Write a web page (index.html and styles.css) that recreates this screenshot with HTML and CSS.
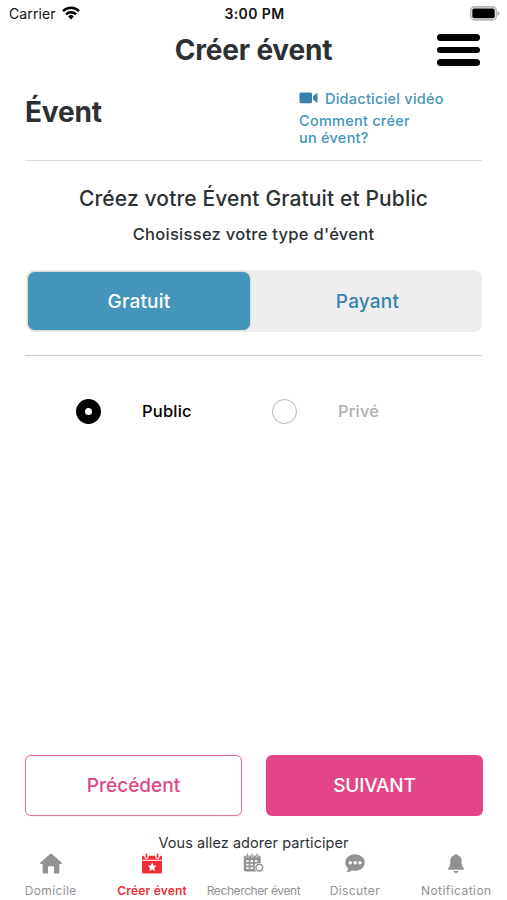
FILE: index.html
```html
<!DOCTYPE html>
<html lang="fr">
<head>
<meta charset="utf-8">
<title>Créer évent</title>
<link rel="stylesheet" href="styles.css">
</head>
<body>
<div class="app">
  <div class="status">
    <div class="carrier"><span>Carrier</span>
      <svg width="18" height="14" viewBox="0 0 18 14" fill="none" stroke="#000" stroke-width="2.5"><path d="M1 5.1a11.5 11.5 0 0 1 16 0M4 8.3a7.2 7.2 0 0 1 10 0"/><path d="M9 13.4 6.1 10.5a4.2 4.2 0 0 1 5.8 0z" fill="#000" stroke="none"/></svg>
    </div>
    <span class="clock">3:00 PM</span>
    <svg class="battery" width="31" height="15" viewBox="0 0 31 15"><rect x="1.700" y=".9" width="25.600" height="13" rx="4" fill="#fff" stroke="#b5b5b5" stroke-width="1.6"/><rect x="3.300" y="2.600" width="22.400" height="9.600" rx="1.8"/><path d="M28.4 5.2q2 .6 2 2.3t-2 2.3z" fill="#aaa"/></svg>
  </div>
  <header class="header">
    <h1 class="title">Créer évent</h1>
    <div class="burger"><i></i><i></i><i></i></div>
  </header>
  <main class="content">
    <section class="intro">
      <h2 class="heading">Évent</h2>
      <div class="tutorial">
        <div class="video"><svg width="19" height="12" viewBox="0 0 19 12" fill="#3682ae"><rect x=".5" y=".5" width="12.5" height="10.800" rx="1.500"/><path d="M14 4.200 17.200 1.500q1.300-.8 1.300.7v7.500q0 1.400-1.300.6L14 7.600z"/></svg><span class="video-label">Didacticiel vidéo</span></div>
        <div class="help"><span class="help-a">Comment créer</span><br><span class="help-b">un évent?</span></div>
      </div>
    </section>
    <section class="kind">
      <h3 class="kind-title"><span>Créez votre Évent Gratuit et Public</span></h3>
      <p class="kind-sub"><span>Choisissez votre type d'évent</span></p>
      <div class="segments">
        <div class="segment active"><span>Gratuit</span></div>
        <div class="segment"><span>Payant</span></div>
      </div>
    </section>
    <section class="radios">
      <div class="option"><i class="radio checked"></i><span class="public">Public</span></div>
      <div class="option muted"><i class="radio"></i><span class="prive">Privé</span></div>
    </section>
    <section class="actions">
      <div class="button outline"><span>Précédent</span></div>
      <div class="button filled"><span>SUIVANT</span></div>
    </section>
  </main>
  <p class="tagline"><span>Vous allez adorer participer</span></p>
  <nav class="tabs">
    <div class="tab"><svg width="24" height="22" viewBox="0 0 24 22"><path fill="currentColor" d="M12 .8q.7 0 1.200.5l9.400 8.200q1 1.200-.4 1.500h-1.800v8.200q0 1.300-1.300 1.300H15v-6.200q0-1-1-1h-4q-1 0-1 1v6.200H4.900q-1.300 0-1.300-1.300V11H1.800q-1.400-.3-.4-1.500l9.400-8.200q.5-.5 1.200-.5z"/></svg><span class="t1">Domicile</span></div>
    <div class="tab current"><svg width="24" height="22" viewBox="0 0 24 22"><path fill="currentColor" d="M2 7.700h20v11.200q0 1.600-1.600 1.600H3.600Q2 20.500 2 18.900z"/><path fill="currentColor" d="M2 6.700V4.200q0-1.400 1.400-1.400h.8q.2 3.200 2.300 3.200t2.300-3.200h6.400q.2 3.200 2.300 3.200t2.300-3.200h.8q1.400 0 1.400 1.400v2.500z"/><path d="M6.500 1.300v2.900M17.500 1.300v2.900" stroke="currentColor" stroke-width="1.700" stroke-linecap="round"/><path fill="#fff" d="m12.200 9.600 1.300 2.800 3 .4-2.200 2.100.6 3.100-2.700-1.500-2.700 1.500.6-3.100-2.200-2.100 3-.4z"/></svg><span class="t2">Créer évent</span></div>
    <div class="tab"><svg width="24" height="22" viewBox="0 0 24 22"><path fill="currentColor" d="M4.500 2.500h13.500q1.700 0 1.700 1.700V18.500H4.500q-1.700 0-1.700-1.700V4.200q0-1.700 1.700-1.700z"/><path d="M6.500 1v3.600M11.200 1v3.600M16 1v3.600" stroke="#fff" stroke-width="2.400"/><path d="M6.500 .8v3.200M11.200 .8v3.200M16 .8v3.200" stroke="currentColor" stroke-width="1.300" stroke-linecap="round"/><path d="M5.200 8.200h2.500m1.800 0h2.500m1.800 0h2.500M5.200 11.700h2.500m1.800 0h2.500m1.800 0h2.500M5.200 15.200h2.500m1.800 0h2.500" stroke="#fff" stroke-width="1.800"/><circle cx="18.300" cy="14.600" r="4.700" fill="#fff"/><circle cx="18.300" cy="14.600" r="3.400" fill="#fff" stroke="currentColor" stroke-width="1.500"/></svg><span class="t3">Rechercher évent</span></div>
    <div class="tab"><svg width="24" height="22" viewBox="0 0 24 22"><path fill="currentColor" d="M12 1.200c5.500 0 9.700 3.600 9.700 8.300s-4.200 8.300-9.700 8.300q-1.500 0-3-.4c-1.500 1.100-3.300 1.600-5.500 1.700 1-1 1.600-2.200 1.600-3.600-1.800-1.500-2.800-3.600-2.800-6 0-4.700 4.200-8.300 9.700-8.300z"/><g fill="#fff"><circle cx="7.300" cy="9.700" r="1.700"/><circle cx="12.100" cy="9.700" r="1.700"/><circle cx="16.900" cy="9.700" r="1.700"/></g></svg><span class="t4">Discuter</span></div>
    <div class="tab"><svg width="24" height="22" viewBox="0 0 24 22"><path fill="currentColor" d="M12 .7q1 0 1 1.200c3.200.6 4.700 3 4.700 6 0 4.300.7 5.700 2 7.200.7 1-.1 1.600-.8 1.600H5.100c-.7 0-1.500-.6-.8-1.600 1.300-1.500 2-2.900 2-7.200 0-3 1.500-5.400 4.700-6Q11 .7 12 .7zM9.500 18h5q-.3 1.900-2.500 1.900T9.500 18z"/></svg><span class="t5">Notification</span></div>
  </nav>
</div>
</body>
</html>
```
FILE: styles.css
```css
* { box-sizing: border-box; }
body { margin: 0; background: #fff; font-family: Inter, "Liberation Sans", sans-serif; color: #2c3133; }
h1, h2, h3, p { margin: 0; }
span { white-space: nowrap; }
svg { display: block; flex: none; }
.app { width: 507px; height: 900px; display: flex; flex-direction: column; overflow: hidden; }
.status { height: 28px; display: grid; grid-template-columns: 1fr auto 1fr; align-items: center; padding: 0 7px 2px 9px; color: #111; font-size: 14px; }
.carrier { display: flex; align-items: center; gap: 6px; letter-spacing: .1px; }
.clock { font-weight: 600; letter-spacing: .4px; }
.battery { justify-self: end; }
.header { height: 44px; display: grid; grid-template-columns: 1fr auto 1fr; align-items: center; padding: 0 27px; }
.title { grid-column: 2; font-size: 28px; line-height: 44px; font-weight: 700; letter-spacing: -.2px; white-space: nowrap; }
.burger { justify-self: end; display: flex; flex-direction: column; gap: 6px; }
.burger i { width: 43px; height: 6.500px; border-radius: 4px; background: #000; }
.content { flex: 1; display: flex; flex-direction: column; padding: 0 25px; }
.intro { height: 89px; border-bottom: 1px solid #d9d9d9; display: grid; grid-template-columns: 274px 1fr; }
.heading { font-size: 28px; line-height: 36px; font-weight: 700; letter-spacing: -.15px; padding-top: 22px; }
.tutorial { padding-top: 17px; color: #4495bb; font-size: 14.500px; font-weight: 550; letter-spacing: .25px; }
.video { display: flex; align-items: center; gap: 7px; height: 18px; }
.help { line-height: 17px; padding-top: 5px; }
.kind { height: 195px; border-bottom: 1px solid #ccc; text-align: center; }
.kind-title { font-size: 21px; line-height: 30px; font-weight: 550; letter-spacing: .14px; padding-top: 23px; }
.kind-sub { font-size: 16.500px; line-height: 24px; font-weight: 550; letter-spacing: .28px; padding-top: 8px; }
.segments { margin: 24px 0 0 1px; height: 62px; border-radius: 8px; background: #eee; padding: 2px; display: grid; grid-template-columns: 222px 1fr; }
.segment { display: flex; align-items: center; justify-content: center; color: #3682ae; font-size: 19px; font-weight: 550; letter-spacing: .2px; border-radius: 7px; padding-left: 5px; }
.active { background: #4495bb; color: #fff; box-shadow: 0 0 2px #aaa; padding-left: 0; }
.radios { display: grid; grid-template-columns: 196px 1fr; padding: 42px 0 0 51px; font-size: 16.500px; color: #000; font-weight: 500; letter-spacing: .2px; }
.option { display: flex; align-items: center; gap: 41px; height: 26px; }
.muted { color: #b0b0b0; }
.radio { width: 25px; height: 25px; border-radius: 50%; border: 1px solid #b5b5b5; }
.checked { border: 9px solid #000; }
.actions { margin-top: auto; display: grid; grid-template-columns: 217px 217px; gap: 24px; height: 61px; }
.button { display: flex; align-items: center; justify-content: center; border-radius: 6px; font-size: 19px; font-weight: 500; }
.outline { border: 1.500px solid #df719b; color: #e24688; box-shadow: 0 0 1px #df719b; }
.filled { background: #e24688; color: #fff; letter-spacing: -.2px; }
.tagline { height: 35px; padding-top: 16px; text-align: center; font-size: 14.500px; line-height: 22px; letter-spacing: .06px; }
.tabs { height: 49px; display: grid; grid-template-columns: repeat(5, 1fr); }
.tab { display: flex; flex-direction: column; align-items: center; color: #929292; font-size: 12px; padding-top: 2px; }
.tab span { line-height: 16px; margin-top: 8px; }
.t1 { letter-spacing: .4px; }
.t2 { letter-spacing: .2px; }
.t3 { letter-spacing: -.4px; }
.t4 { letter-spacing: .4px; }
.t5 { letter-spacing: .45px; }
.current { color: #ed3237; font-weight: 600; }
```
